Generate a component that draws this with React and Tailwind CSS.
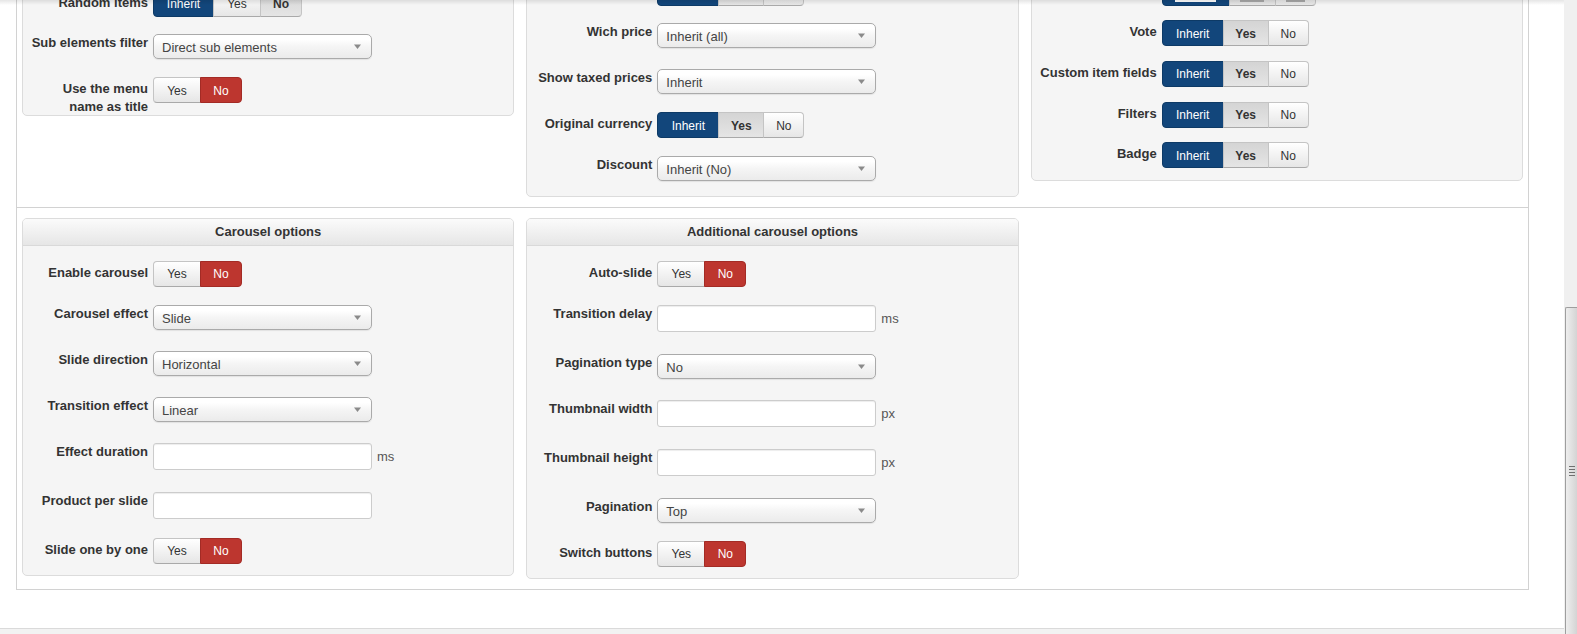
import React from "react";

const FONT = { fontFamily: '"Liberation Sans", Arial, Helvetica, sans-serif' };

const ROWH = {
  toggle: "h-[40.67px]",
  select: "h-[46px]",
  input: "h-[49px]",
};

const KIND = {
  blue: "bg-[#12467b] border-[#0d3a66] text-white",
  red: "bg-[#bd362f] border-[#a32b25] text-white",
  plain:
    "bg-linear-to-b from-white to-[#e6e6e6] border-[#c4c4c4] border-b-[#a9a9a9] text-[#333]",
  inh: "bg-linear-to-b from-[#d4d4d4] to-[#e5e5e5] border-[#c4c4c4] border-b-[#a9a9a9] text-[#333] font-bold",
};

function Toggle({ items }) {
  return (
    <div className="flex h-[26px]">
      {items.map((it, i) => {
        const first = i === 0;
        const last = i === items.length - 1;
        return (
          <div
            key={i}
            className={`relative flex h-[26px] items-center justify-center border pt-[1px] text-[12px] ${KIND[it.k]} ${
              first ? "rounded-l-[4px]" : "-ml-px"
            } ${last ? "rounded-r-[4px]" : ""}`}
            style={{ width: it.w }}
          >
            {it.t}
          </div>
        );
      })}
    </div>
  );
}

const YESNO = [
  { t: "Yes", w: 48, k: "plain" },
  { t: "No", w: 42, k: "red" },
];

const IYN = [
  { t: "Inherit", w: 62, k: "blue" },
  { t: "Yes", w: 46, k: "inh" },
  { t: "No", w: 41, k: "plain" },
];

function Select({ value }) {
  return (
    <div className="relative h-[25px] w-[219px] rounded-[5px] border border-[#aaa] bg-linear-to-b from-white from-20% via-[#f5f5f5] to-[#ebebeb] pl-[8px] text-[13px] leading-[24px] text-[#444] shadow-[0_1px_1px_rgba(0,0,0,0.08)]">
      <span className="relative top-[1px]">{value}</span>
      <svg
        className="absolute right-[10px] top-[9px]"
        width="7"
        height="5"
        viewBox="0 0 7 5"
      >
        <path d="M0 0.5h7L3.5 5z" fill="#8a8a8a" />
      </svg>
    </div>
  );
}

function Input({ unit }) {
  return (
    <>
      <div className="h-[27px] w-[219px] rounded-[3px] border border-[#cccccc] bg-white shadow-[inset_0_1px_1px_rgba(0,0,0,0.075)]" />
      {unit && (
        <span className="text-[13px] leading-[27px] text-[#555]">{unit}</span>
      )}
    </>
  );
}

function Row({ type, label, children }) {
  return (
    <div className={`flex ${ROWH[type]}`}>
      <div className="w-[125px] shrink-0 pt-[3px] text-right text-[13px] font-bold leading-[18px] text-[#333]">
        {label}
      </div>
      <div
        className={`ml-[5px] flex items-start gap-[5px] ${
          type === "toggle" ? "" : "pt-[3px]"
        }`}
      >
        {children}
      </div>
    </div>
  );
}

function Panel({ title, className = "", children }) {
  return (
    <div
      className={`rounded-[5px] border border-[#dcdcdc] bg-[#f5f5f5] ${className}`}
    >
      {title && (
        <div className="flex h-[27px] items-center justify-center rounded-t-[4px] border-b border-[#d9d9d9] bg-linear-to-b from-[#fbfbfb] to-[#e6e6e6] text-[13px] font-bold text-[#333]">
          {title}
        </div>
      )}
      <div className={`${title ? "pt-[15px]" : ""} -mb-[3px]`}>{children}</div>
    </div>
  );
}

function ImageToggle() {
  return (
    <div className="flex h-[26px]">
      <div className="flex h-[26px] w-[68px] items-end justify-center rounded-l-[4px] border border-[#0d3a66] bg-[#12467b] pb-[3px]">
        <div className="h-[10px] w-[41px] bg-white" />
      </div>
      <div className="-ml-px flex h-[26px] w-[47px] items-end justify-center border border-[#c4c4c4] border-b-[#a9a9a9] bg-linear-to-b from-[#d4d4d4] to-[#e5e5e5] pb-[3px]">
        <div className="h-[10px] w-[24px] border-x border-b-2 border-[#a8a8a8]" />
      </div>
      <div className="-ml-px flex h-[26px] w-[41px] items-end justify-center rounded-r-[4px] border border-[#c4c4c4] border-b-[#a9a9a9] bg-linear-to-b from-white to-[#e6e6e6] pb-[3px]">
        <div className="h-[10px] w-[19px] border-x border-b-2 border-[#a8a8a8]" />
      </div>
    </div>
  );
}

function Scrollbar() {
  return (
    <div className="flex w-[13px] shrink-0 flex-col bg-[#f0f0f0]">
      <div className="h-[307px] shrink-0" />
      <div className="ml-[1px] flex flex-1 items-center justify-center rounded-tl-[2px] border-l border-t border-[#9e9e9e] bg-linear-to-r from-[#eeeeee] to-[#d4d4d4]">
        <div className="flex flex-col gap-[2px]">
          <div className="h-px w-[6px] bg-[#6f6f6f]" />
          <div className="h-px w-[6px] bg-[#6f6f6f]" />
          <div className="h-px w-[6px] bg-[#6f6f6f]" />
          <div className="h-px w-[6px] bg-[#6f6f6f]" />
        </div>
      </div>
    </div>
  );
}

export default function App() {
  return (
    <div
      className="flex h-[634px] w-full overflow-hidden bg-white"
      style={FONT}
    >
      <div className="relative flex min-w-0 flex-1 flex-col">
        <div className="ml-[16px] w-[1513px]">
          {/* Row 1 (scrolled, top cut off) */}
          <div className="grid grid-cols-3 items-start gap-x-[12px] border-x border-b border-[#d2d2d2] px-[5px] pb-[10px]">
            <Panel className="mt-[-10.33px]">
              <Row type="toggle" label="Random items">
                <Toggle
                  items={[
                    { t: "Inherit", w: 61, k: "blue" },
                    { t: "Yes", w: 48, k: "plain" },
                    { t: "No", w: 42, k: "inh" },
                  ]}
                />
              </Row>
              <Row type="select" label="Sub elements filter">
                <Select value="Direct sub elements" />
              </Row>
              <Row
                type="toggle"
                label={
                  <>
                    Use the menu
                    <br />
                    name as title
                  </>
                }
              >
                <Toggle items={YESNO} />
              </Row>
            </Panel>

            <Panel className="mt-[-21.33px]">
              <Row type="toggle" label="">
                <Toggle items={IYN} />
              </Row>
              <Row type="select" label="Wich price">
                <Select value="Inherit (all)" />
              </Row>
              <Row type="select" label="Show taxed prices">
                <Select value="Inherit" />
              </Row>
              <Row type="toggle" label="Original currency">
                <Toggle items={IYN} />
              </Row>
              <Row type="select" label="Discount">
                <Select value="Inherit (No)" />
              </Row>
            </Panel>

            <Panel className="mt-[-21.33px]">
              <Row type="toggle" label="">
                <ImageToggle />
              </Row>
              <Row type="toggle" label="Vote">
                <Toggle items={IYN} />
              </Row>
              <Row type="toggle" label="Custom item fields">
                <Toggle items={IYN} />
              </Row>
              <Row type="toggle" label="Filters">
                <Toggle items={IYN} />
              </Row>
              <Row type="toggle" label="Badge">
                <Toggle items={IYN} />
              </Row>
            </Panel>
          </div>

          {/* Row 2 */}
          <div className="grid grid-cols-3 items-start gap-x-[12px] border-x border-b border-[#d2d2d2] px-[5px] py-[10px]">
            <Panel title="Carousel options">
              <Row type="toggle" label="Enable carousel">
                <Toggle items={YESNO} />
              </Row>
              <Row type="select" label="Carousel effect">
                <Select value="Slide" />
              </Row>
              <Row type="select" label="Slide direction">
                <Select value="Horizontal" />
              </Row>
              <Row type="select" label="Transition effect">
                <Select value="Linear" />
              </Row>
              <Row type="input" label="Effect duration">
                <Input unit="ms" />
              </Row>
              <Row type="input" label="Product per slide">
                <Input />
              </Row>
              <Row type="toggle" label="Slide one by one">
                <Toggle items={YESNO} />
              </Row>
            </Panel>

            <Panel title="Additional carousel options">
              <Row type="toggle" label="Auto-slide">
                <Toggle items={YESNO} />
              </Row>
              <Row type="input" label="Transition delay">
                <Input unit="ms" />
              </Row>
              <Row type="select" label="Pagination type">
                <Select value="No" />
              </Row>
              <Row type="input" label="Thumbnail width">
                <Input unit="px" />
              </Row>
              <Row type="input" label="Thumbnail height">
                <Input unit="px" />
              </Row>
              <Row type="select" label="Pagination">
                <Select value="Top" />
              </Row>
              <Row type="toggle" label="Switch buttons">
                <Toggle items={YESNO} />
              </Row>
            </Panel>

            <div />
          </div>
        </div>

        <div className="mt-auto h-[6px] shrink-0 border-t border-[#dadada] bg-[#f2f2f2]" />

        <div className="pointer-events-none absolute inset-x-0 top-0 h-[5px] bg-linear-to-b from-black/10 to-transparent" />
      </div>
      <Scrollbar />
    </div>
  );
}
